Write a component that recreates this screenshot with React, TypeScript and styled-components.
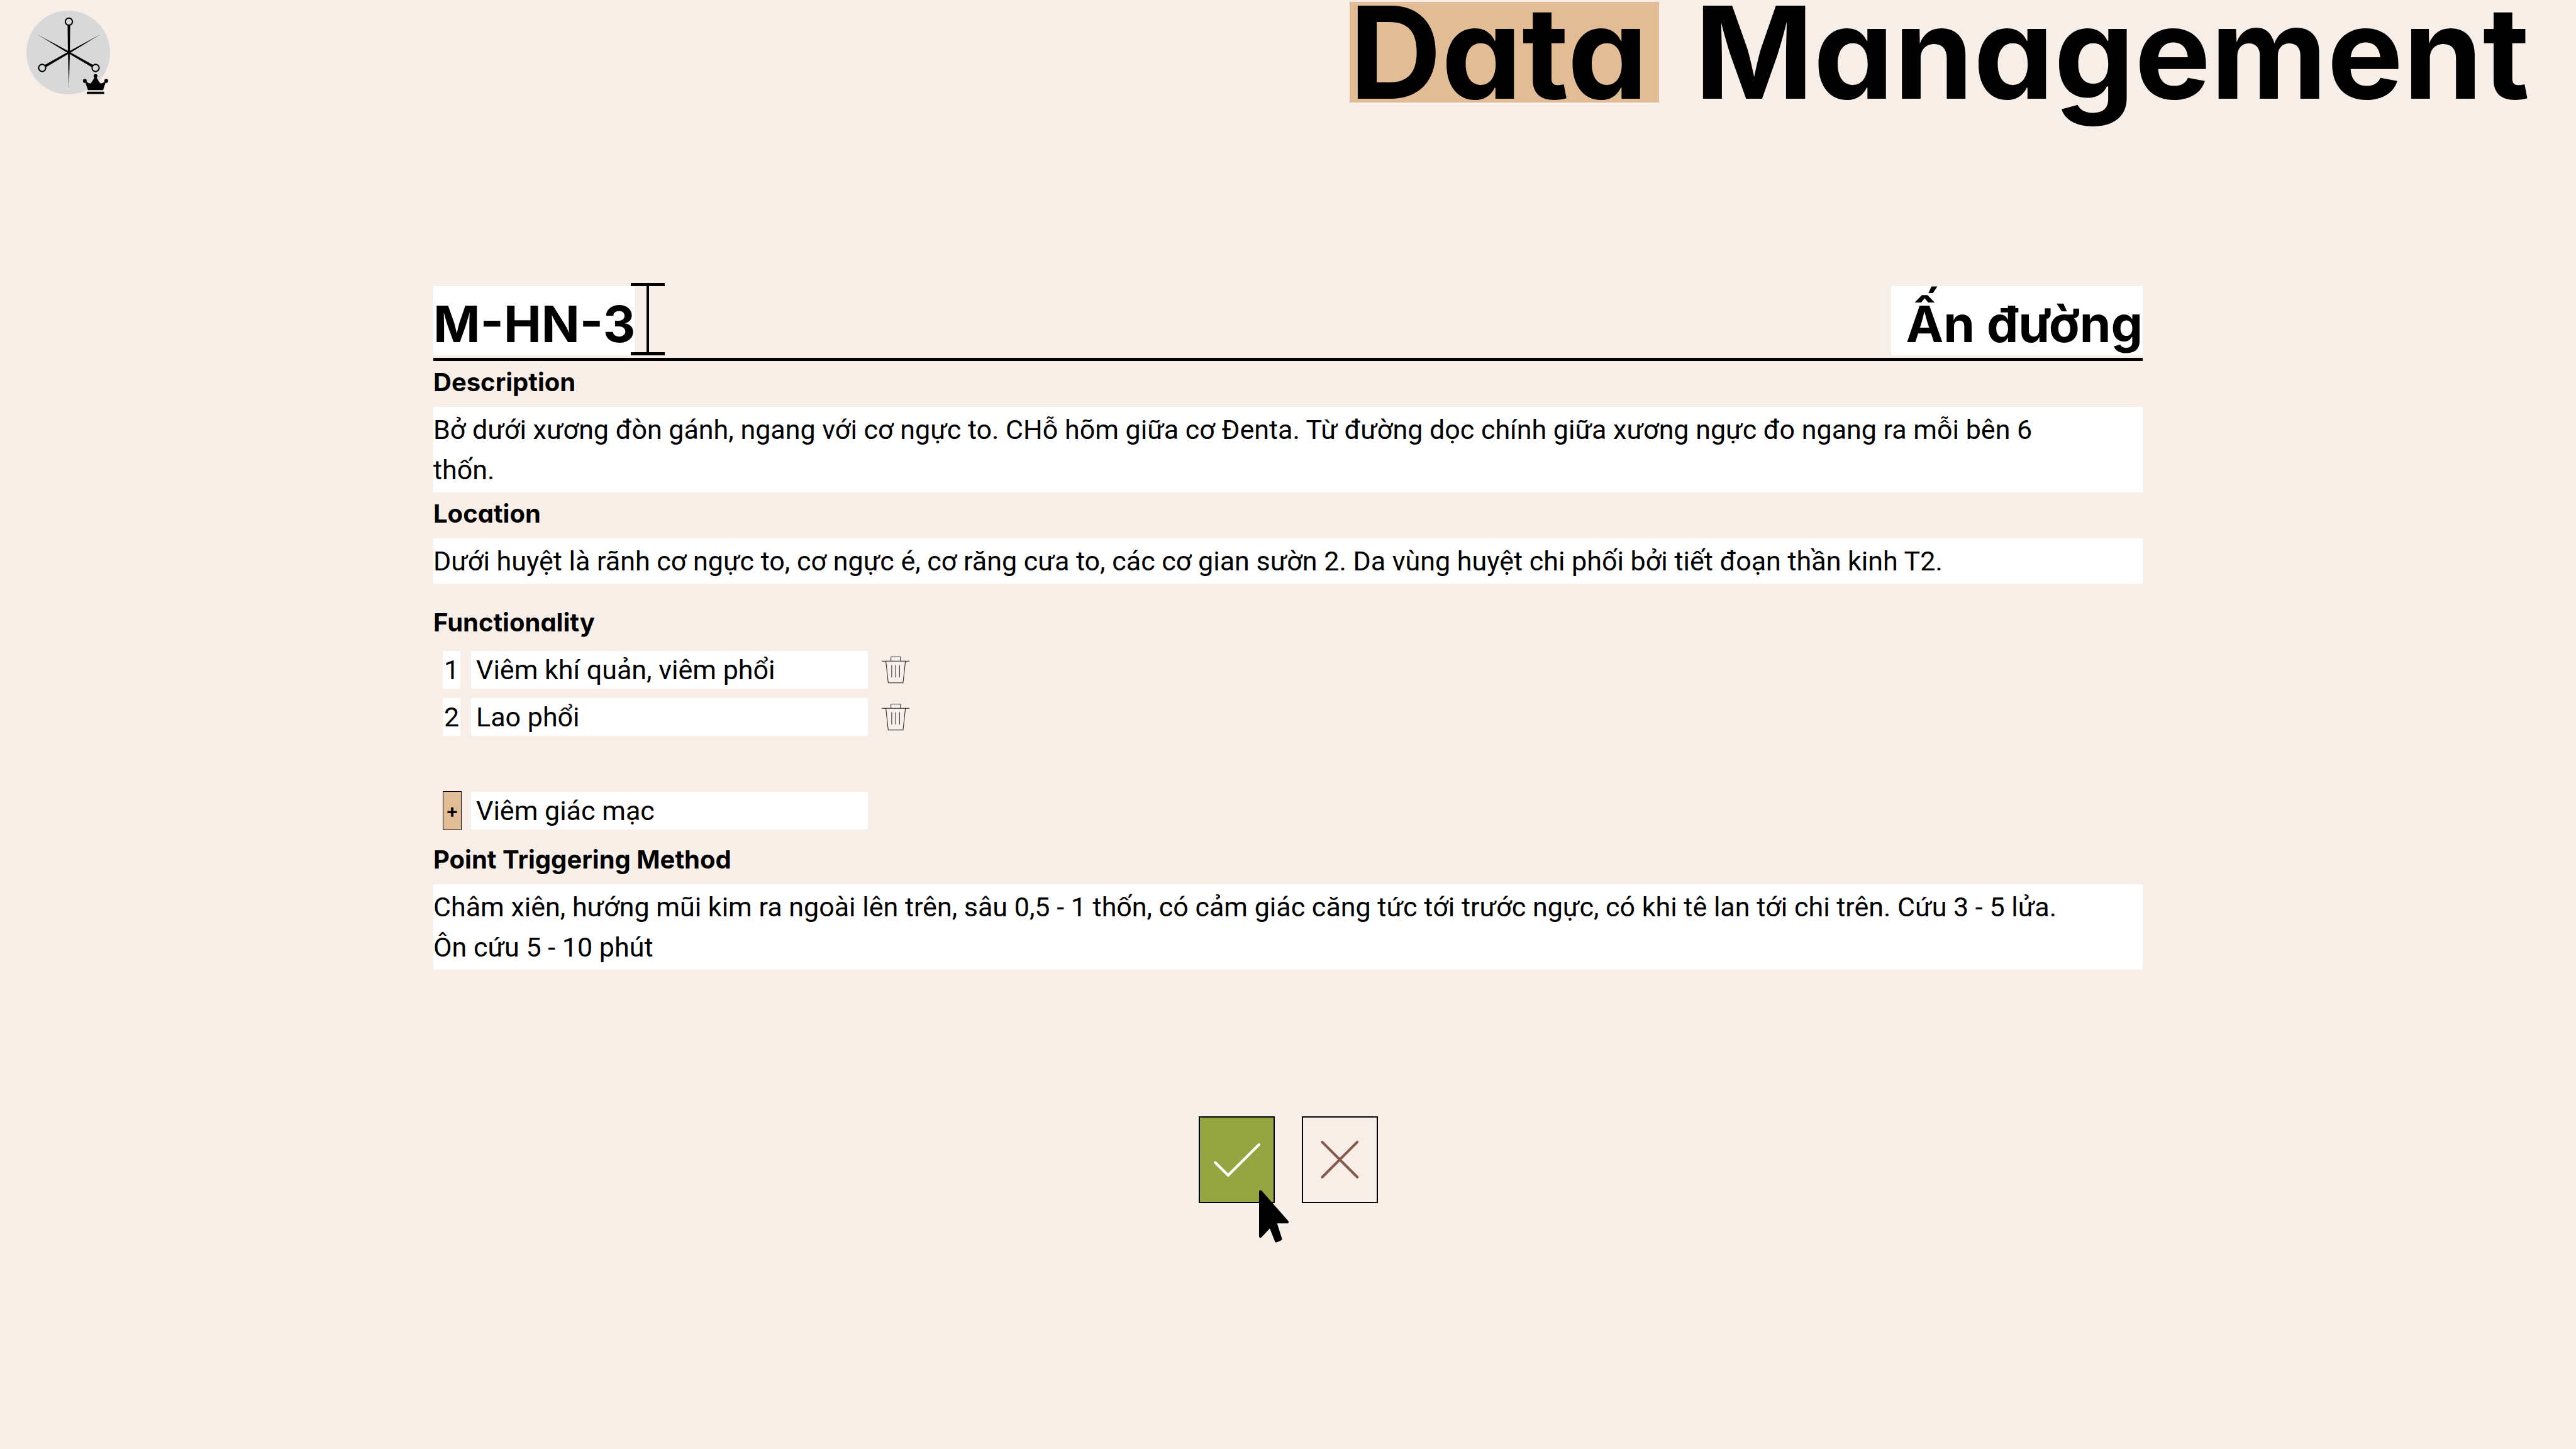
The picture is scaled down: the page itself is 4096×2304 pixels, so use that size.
import React from "react";
import styled, { createGlobalStyle } from "styled-components";

const color = {
  page: "#f8eee8",
  ink: "#000000",
  field: "#ffffff",
  accent: "#e2bc95",
  confirm: "#95a542",
  cancel: "#85594d",
  disc: "#d8d8d8",
};

const headingFont = `Inter, "Liberation Sans", sans-serif`;
const bodyFont = `Roboto, "Liberation Sans", sans-serif`;

const GlobalStyle = createGlobalStyle`
  *, *::before, *::after { box-sizing: border-box; }
  body {
    margin: 0;
    background: ${color.page};
    color: ${color.ink};
    font-family: ${bodyFont};
  }
  input, textarea, button {
    margin: 0;
    padding: 0;
    border: 0;
    border-radius: 0;
    color: inherit;
    outline: none;
  }
`;

const Page = styled.div`
  min-height: 100vh;
`;

const Header = styled.header`
  display: flex;
  justify-content: space-between;
  align-items: flex-start;
  height: 164px;
  padding: 3px 74px 0 42px;
`;

const HomeLink = styled.a`
  display: block;
  margin-top: 14px;
  line-height: 0;
`;

const Title = styled.h1`
  margin: 0;
  font: 700 203px/160px ${headingFont};
  font-feature-settings: "cv11";
  white-space: nowrap;
`;

const Mark = styled.mark`
  display: inline-block;
  margin-right: 8px;
  padding-right: 18px;
  background: ${color.accent};
  color: inherit;
`;

const Editor = styled.form`
  width: calc(100% - 160px);
  max-width: 2718px;
  margin: 0 auto;
  padding-top: 291px;
`;

const PointHeader = styled.div`
  display: flex;
  justify-content: space-between;
  padding-bottom: 4px;
  border-bottom: 5px solid ${color.ink};
`;

const CaretAnchor = styled.div`
  position: relative;
`;

const HeadlineInput = styled.textarea<{ $width: number; $align?: string }>`
  display: block;
  width: ${(p) => p.$width}px;
  height: 110px;
  padding-top: 10px;
  overflow: hidden;
  resize: none;
  white-space: nowrap;
  background: ${color.field};
  font: 700 80px/100px ${headingFont};
  font-feature-settings: "cv11";
  text-align: ${(p) => p.$align ?? "left"};
`;

const TextCaret = styled.svg`
  position: absolute;
  top: -5px;
  left: 100%;
  margin-left: -6px;
  width: 54px;
  height: 115px;
`;

const Label = styled.label`
  display: block;
  padding-bottom: 5px;
  font: 700 40px/68px ${headingFont};
  font-feature-settings: "cv11";
`;

const GroupLabel = styled(Label).attrs({ as: "div" })`
  margin-top: 28px;
`;

const TextArea = styled.textarea<{ $lines: number }>`
  display: block;
  width: 100%;
  height: ${(p) => p.$lines * 64 + 8}px;
  padding: 4px 120px 4px 0;
  overflow: hidden;
  resize: none;
  background: ${color.field};
  font: 400 43px/64px ${bodyFont};
`;

const FunctionList = styled.div`
  display: grid;
  row-gap: 15px;
  padding: 6px 0 14px 15px;
`;

const FunctionRow = styled.div<{ $separate?: boolean }>`
  display: flex;
  align-items: center;
  height: 60px;
  margin-top: ${(p) => (p.$separate ? 74 : 0)}px;
`;

const Slot = styled.div`
  flex: none;
  width: 45px;
`;

const RowNumber = styled.div`
  width: 28px;
  background: ${color.field};
  font: 400 43px/60px ${bodyFont};
  text-align: center;
`;

const RowInput = styled.input`
  width: 631px;
  height: 60px;
  padding-left: 8px;
  background: ${color.field};
  font: 400 43px/60px ${bodyFont};
`;

const IconButton = styled.button`
  margin-left: 22px;
  background: none;
  line-height: 0;
`;

const AddButton = styled.button`
  display: block;
  width: 30px;
  height: 62px;
  border: 1px solid ${color.ink};
  background: ${color.accent};
  font: 700 30px/60px ${headingFont};
`;

const Actions = styled.div`
  display: flex;
  justify-content: center;
  gap: 43px;
  margin-top: 233px;
`;

const ActionButton = styled.button<{ $fill?: string }>`
  position: relative;
  width: 121px;
  height: 138px;
  border: 2px solid ${color.ink};
  background: ${(p) => p.$fill ?? "transparent"};
`;

const ActionIcon = styled.svg`
  display: block;
  width: 100%;
  height: 100%;
  fill: none;
  stroke-width: 5.5;
  stroke-linecap: round;
`;

const Pointer = styled.svg`
  position: absolute;
  left: 94px;
  top: 115px;
  width: 47px;
  height: 84px;
  z-index: 1;
`;

const Needle = ({ turn }: { turn: number }) => (
  <g transform={`rotate(${turn} 429 325)`}>
    <circle cx="429" cy="134" r="22" fill="none" stroke="#000" strokeWidth="8" />
    <path d="M421 157H437L435 325H423Z" />
    <path d="M423 318H435L429.600 543H428.400Z" fill="url(#needle-tip)" />
  </g>
);

const Logo = () => (
  <svg width="133" height="133" viewBox="166 66 518 518" aria-hidden="true">
    <defs>
      <linearGradient id="needle-tip" x1="0" y1="0" x2="0" y2="1">
        <stop offset="0.5" stopColor="#000" />
        <stop offset="1" stopColor="#000" stopOpacity="0.5" />
      </linearGradient>
    </defs>
    <circle cx="425" cy="325" r="259" fill={color.disc} />
    <Needle turn={0} />
    <Needle turn={120} />
    <Needle turn={240} />
    <circle cx="594" cy="470" r="12" />
    <circle cx="528" cy="501" r="12" />
    <circle cx="660" cy="501" r="12" />
    <path d="M547 558L532 512L538 506Q550 516 562 517Q570 512 588 478H600Q616 510 626 517Q638 516 650 506L656 512L641 558Z" />
    <rect x="540" y="567" width="108" height="15" rx="4" />
  </svg>
);

const TrashIcon = () => (
  <svg width="44" height="44" viewBox="45 44 174 174" fill="none" stroke="#222" strokeWidth="4" aria-hidden="true">
    <path d="M45 77H219M103 77V50H163V77M71 77L86 213H179L194 77M108 101V178M132 101V178M157 101V178" />
  </svg>
);

type Entry = { id: number; text: string };

const entries: Entry[] = [
  { id: 1, text: "Viêm khí quản, viêm phổi" },
  { id: 2, text: "Lao phổi" },
];

const description =
  "Bở dưới xương đòn gánh, ngang với cơ ngực to. CHỗ hõm giữa cơ Đenta. Từ đường dọc chính giữa xương ngực đo ngang ra mỗi bên 6 thốn.";
const location =
  "Dưới huyệt là rãnh cơ ngực to, cơ ngực é, cơ răng cưa to, các cơ gian sườn 2. Da vùng huyệt chi phối bởi tiết đoạn thần kinh T2.";
const method =
  "Châm xiên, hướng mũi kim ra ngoài lên trên, sâu 0,5 - 1 thốn, có cảm giác căng tức tới trước ngực, có khi tê lan tới chi trên. Cứu 3 - 5 lửa. Ôn cứu 5 - 10 phút";

export default function App() {
  return (
    <Page>
      <GlobalStyle />
      <Header>
        <HomeLink href="#" aria-label="Home">
          <Logo />
        </HomeLink>
        <Title>
          <Mark>Data</Mark> Management
        </Title>
      </Header>
      <Editor onSubmit={(e) => e.preventDefault()}>
        <PointHeader>
          <CaretAnchor>
            <HeadlineInput rows={1} $width={320} aria-label="Point code" defaultValue="M-HN-3" spellCheck={false} />
            <TextCaret viewBox="0 0 54 115" aria-hidden="true">
              <path d="M0 0H54V5H29V110H54V115H0V110H25V5H0Z" />
            </TextCaret>
          </CaretAnchor>
          <HeadlineInput rows={1} $width={400} $align="right" aria-label="Point name" defaultValue="Ấn đường" spellCheck={false} />
        </PointHeader>

        <Label htmlFor="description">Description</Label>
        <TextArea id="description" $lines={2} defaultValue={description} spellCheck={false} />

        <Label htmlFor="location">Location</Label>
        <TextArea id="location" $lines={1} defaultValue={location} spellCheck={false} />

        <GroupLabel id="functionality">Functionality</GroupLabel>
        <FunctionList role="group" aria-labelledby="functionality">
          {entries.map((entry) => (
            <FunctionRow key={entry.id}>
              <Slot>
                <RowNumber>{entry.id}</RowNumber>
              </Slot>
              <RowInput aria-label={`Functionality ${entry.id}`} defaultValue={entry.text} spellCheck={false} />
              <IconButton type="button" aria-label={`Delete functionality ${entry.id}`}>
                <TrashIcon />
              </IconButton>
            </FunctionRow>
          ))}
          <FunctionRow $separate>
            <Slot>
              <AddButton type="button" aria-label="Add functionality">
                +
              </AddButton>
            </Slot>
            <RowInput aria-label="New functionality" defaultValue="Viêm giác mạc" spellCheck={false} />
          </FunctionRow>
        </FunctionList>

        <Label htmlFor="method">Point Triggering Method</Label>
        <TextArea id="method" $lines={2} defaultValue={method} spellCheck={false} />

        <Actions>
          <ActionButton type="submit" $fill={color.confirm} aria-label="Save">
            <ActionIcon viewBox="2 2 154 176" stroke="#fff">
              <path d="M34 96L61 122.500L125.500 58.500" />
            </ActionIcon>
            <Pointer viewBox="0 0 184 325" aria-hidden="true">
              <path
                d="M9 9L175 198H100L134 304L107 316L70 222L9 287Z"
                stroke="#000"
                strokeWidth="18"
                strokeLinejoin="round"
              />
            </Pointer>
          </ActionButton>
          <ActionButton type="button" aria-label="Cancel">
            <ActionIcon viewBox="2 2 154 176" stroke={color.cancel}>
              <path d="M42 53L115.500 126.500M115.500 53L42 126.500" />
            </ActionIcon>
          </ActionButton>
        </Actions>
      </Editor>
    </Page>
  );
}
